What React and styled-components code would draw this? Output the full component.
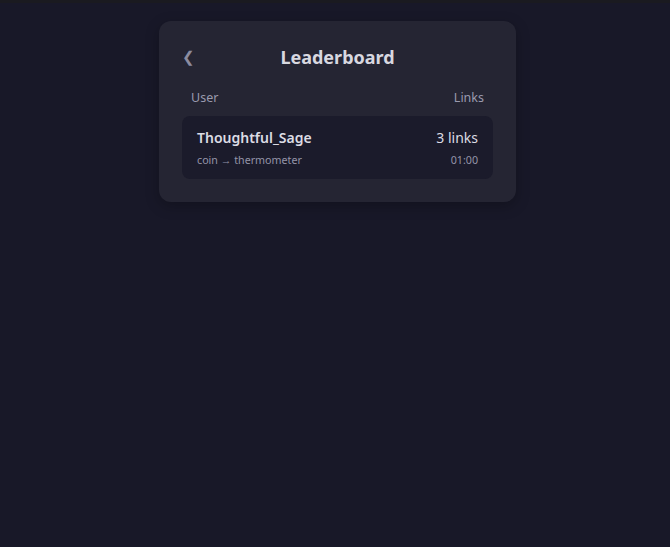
import React from "react";
import styled, { createGlobalStyle } from "styled-components";

const GlobalStyle = createGlobalStyle`
  html, body {
    margin: 0;
    padding: 0;
    background: #181828;
  }
  body {
    font-family: "Noto Sans", "Open Sans", sans-serif;
  }
`;

const Page = styled.div`
  min-height: 547px;
  border-top: 3px solid #1a1a20;
  box-sizing: border-box;
  padding: 18px 0 0 5px;
  display: flex;
  justify-content: center;
  align-items: flex-start;
`;

const Card = styled.div`
  width: 357px;
  box-sizing: border-box;
  background: #252533;
  border-radius: 12px;
  padding: 20px 23px 23px;
  box-shadow: 0 4px 14px rgba(0, 0, 0, 0.25);
`;

const Header = styled.div`
  position: relative;
  display: flex;
  justify-content: center;
  align-items: center;
  height: 32px;
`;

const BackButton = styled.button`
  position: absolute;
  left: 0;
  top: 50%;
  transform: translateY(-50%);
  background: none;
  border: none;
  padding: 0;
  color: #8c8ca0;
  font-size: 15px;
  cursor: pointer;
  font-family: "DejaVu Sans", sans-serif;
`;

const Title = styled.h2`
  margin: 0;
  font-size: 18px;
  font-weight: 700;
  color: #d8d8e0;
`;

const Columns = styled.div`
  display: flex;
  justify-content: space-between;
  padding: 0 9px;
  margin-top: 16px;
  font-size: 12.5px;
  color: #9a9aae;
`;

const Row = styled.div`
  margin-top: 10px;
  background: #1b1b2b;
  border-radius: 8px;
  padding: 12px 15px 12px;
  display: flex;
  justify-content: space-between;
  align-items: flex-start;
`;

const Stack = styled.div`
  display: flex;
  flex-direction: column;
  align-items: ${(p) => (p.$right ? "flex-end" : "flex-start")};
  gap: 6px;
`;

const Name = styled.div`
  font-size: 14px;
  font-weight: 600;
  color: #dcdce4;
`;

const Count = styled.div`
  font-size: 14px;
  color: #dcdce4;
`;

const Meta = styled.div`
  font-size: 10.7px;
  color: #9494a8;
`;

export default function App() {
  return (
    <>
      <GlobalStyle />
      <Page>
        <Card>
          <Header>
            <BackButton>❮</BackButton>
            <Title>Leaderboard</Title>
          </Header>
          <Columns>
            <span>User</span>
            <span>Links</span>
          </Columns>
          <Row>
            <Stack>
              <Name>Thoughtful_Sage</Name>
              <Meta>coin → thermometer</Meta>
            </Stack>
            <Stack $right>
              <Count>3 links</Count>
              <Meta>01:00</Meta>
            </Stack>
          </Row>
        </Card>
      </Page>
    </>
  );
}
